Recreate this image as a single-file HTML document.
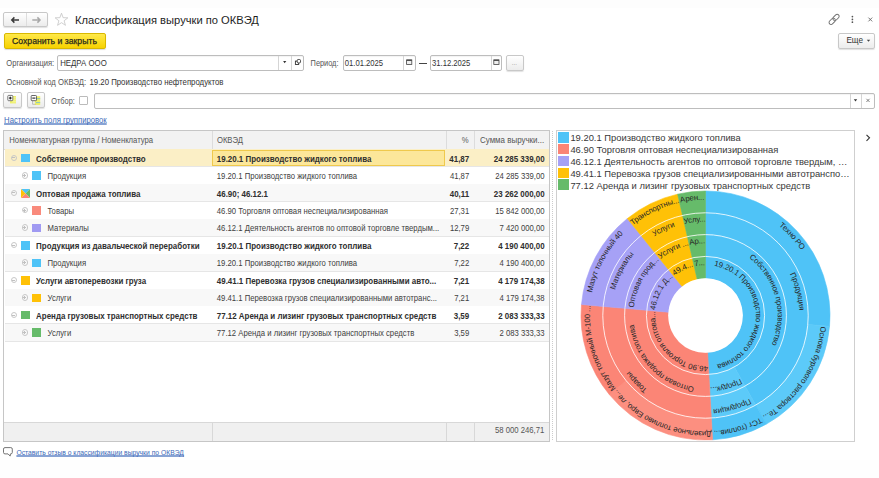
<!DOCTYPE html>
<html><head><meta charset="utf-8"><style>
html,body{margin:0;padding:0;width:879px;height:478px;overflow:hidden;background:#fff;font-family:"Liberation Sans", sans-serif;position:relative}
.abs{position:absolute}
.btn{position:absolute;box-sizing:border-box;border:1px solid #c8c8c8;border-radius:2px;background:linear-gradient(#fff,#ececec);box-shadow:0 1px 1px rgba(0,0,0,0.12)}
.inp{position:absolute;box-sizing:border-box;border:1px solid #bdbdbd;border-radius:2px;background:#fff;box-shadow:inset 0 1px 1px rgba(0,0,0,0.05)}
.t{position:absolute;white-space:nowrap;transform:scaleY(1.2)}
.tt{position:absolute;white-space:nowrap}
</style></head><body>
<div class="abs" style="left:0;top:0;width:879px;height:8px;background:#fdfdfd"></div>

<!-- nav -->
<div class="btn" style="left:3.3px;top:12.2px;width:44.5px;height:15.2px"></div>
<div class="abs" style="left:25.9px;top:13.2px;width:0.9px;height:13.2px;background:#ddd"></div>
<svg class="abs" style="left:0;top:0" width="80" height="30">
 <path d="M11.8,20 H19 M14.4,17.4 L11.8,20 L14.4,22.6" stroke="#3a3a3a" stroke-width="1.5" fill="none"/>
 <path d="M32.3,20 H40 M37.4,17.4 L40,20 L37.4,22.6" stroke="#a8a8a8" stroke-width="1.5" fill="none"/>
 <path d="M61.50,13.20 L63.12,17.68 L67.87,17.83 L64.12,20.75 L65.44,25.32 L61.50,22.65 L57.56,25.32 L58.88,20.75 L55.13,17.83 L59.88,17.68 Z" stroke="#c4c4c4" stroke-width="0.8" fill="none" stroke-linejoin="miter"/>
</svg>
<div class="tt" style="left:75px;top:14.2px;font-size:11.16px;line-height:13px;color:#1e1e1e">Классификация выручки по ОКВЭД</div>

<!-- top right icons -->
<svg class="abs" style="left:820px;top:5px" width="59" height="25">
 <g fill="none" stroke="#707070" stroke-width="0.95" transform="translate(14.1 14.4) rotate(-45)">
  <rect x="-6.3" y="-2" width="7.2" height="4" rx="2"/>
  <rect x="-0.9" y="-2" width="7.2" height="4" rx="2"/>
 </g>
 <circle cx="32.4" cy="11.6" r="0.85" fill="#555"/><circle cx="32.4" cy="14.4" r="0.85" fill="#555"/><circle cx="32.4" cy="17.2" r="0.85" fill="#555"/>
 <path d="M48.4,12.6 L52.2,16.4 M52.2,12.6 L48.4,16.4" stroke="#666" stroke-width="0.9"/>
</svg>

<!-- save button -->
<div class="abs" style="left:3.75px;top:33px;width:101.75px;height:15.75px;box-sizing:border-box;border:1px solid #d9b800;border-radius:2px;background:linear-gradient(#ffe94a,#f7d200);box-shadow:0 1px 1px rgba(0,0,0,0.15)"></div>
<div class="tt" style="left:12px;top:35.2px;font-size:8.68px;line-height:12px;color:#2a2a1a;-webkit-text-stroke:0.25px #2a2a1a">Сохранить и закрыть</div>

<!-- Еще -->
<div class="btn" style="left:838.2px;top:33px;width:36.6px;height:15.8px"></div>
<div class="t" style="left:846.4px;top:34.8px;font-size:8.16px;line-height:12px;color:#333">Еще</div>
<svg class="abs" style="left:866px;top:39px" width="6" height="4"><path d="M0.8,0.8 L4.2,0.8 L2.5,2.8Z" fill="#444"/></svg>

<!-- org row -->
<div class="t" style="left:6.3px;top:57.5px;font-size:7.6px;line-height:12px;color:#555">Организация:</div>
<div class="inp" style="left:56.8px;top:55.3px;width:246.8px;height:15.8px"></div>
<div class="abs" style="left:278.4px;top:56px;width:1px;height:13.6px;background:#d5d5d5"></div>
<div class="abs" style="left:291.3px;top:56px;width:1px;height:13.6px;background:#d5d5d5"></div>
<div class="t" style="left:60.2px;top:57.5px;font-size:7.84px;line-height:12px;color:#333">НЕДРА ООО</div>
<svg class="abs" style="left:0;top:0" width="560" height="80">
 <path d="M283.1,61 L286.3,61 L284.7,63.2Z" fill="#333"/>
 <rect x="295.4" y="61.1" width="3.3" height="3.4" fill="none" stroke="#333" stroke-width="0.9"/>
 <rect x="297.2" y="59.5" width="3.3" height="3.4" rx="1" fill="#fff" stroke="#333" stroke-width="0.9"/>
</svg>
<div class="t" style="left:310.6px;top:57.5px;font-size:7.37px;line-height:12px;color:#555">Период:</div>
<div class="inp" style="left:343.2px;top:55.3px;width:72.6px;height:15.8px"></div>
<div class="abs" style="left:403.4px;top:56px;width:1px;height:13.6px;background:#d5d5d5"></div>
<div class="t" style="left:344.8px;top:57.5px;font-size:7.67px;line-height:12px;color:#333">01.01.2025</div>
<div class="abs" style="left:419px;top:62.5px;width:7.7px;height:0.9px;background:#444"></div>
<div class="inp" style="left:430.3px;top:55.3px;width:72px;height:15.8px"></div>
<div class="abs" style="left:490.5px;top:56px;width:1px;height:13.6px;background:#d5d5d5"></div>
<div class="t" style="left:432px;top:57.5px;font-size:7.67px;line-height:12px;color:#333">31.12.2025</div>
<svg class="abs" style="left:0;top:0" width="560" height="80">
 <rect x="406.6" y="59.9" width="5.2" height="4.6" fill="#eee" stroke="#444" stroke-width="0.8"/><rect x="406.6" y="59.7" width="5.2" height="1.2" fill="#444"/>
 <rect x="493.8" y="59.9" width="5.2" height="4.6" fill="#eee" stroke="#444" stroke-width="0.8"/><rect x="493.8" y="59.7" width="5.2" height="1.2" fill="#444"/>
</svg>
<div class="btn" style="left:506px;top:54.8px;width:17.9px;height:16px"></div>
<div class="t" style="left:511.8px;top:59px;font-size:6px;line-height:8px;color:#999">...</div>

<!-- okved -->
<div class="t" style="left:6.3px;top:76.8px;font-size:7.71px;line-height:12px;color:#555">Основной код ОКВЭД:</div>
<div class="t" style="left:89.5px;top:76.8px;font-size:7.81px;line-height:12px;color:#333">19.20 Производство нефтепродуктов</div>

<!-- tool buttons -->
<div class="btn" style="left:3.1px;top:92.3px;width:18.8px;height:16.2px"></div>
<div class="btn" style="left:27px;top:92.3px;width:17.7px;height:16.2px"></div>
<svg class="abs" style="left:0;top:0" width="60" height="115">
 <rect x="10" y="96" width="6" height="7.4" fill="#eef06a"/>
 <path d="M12.5,97.8 H16 M12.5,99.8 H16 M12.5,101.8 H16" stroke="#f8f8c0" stroke-width="0.6"/>
 <rect x="7.8" y="95.4" width="5" height="5.3" rx="0.8" fill="#fff" stroke="#6a6a6a" stroke-width="0.9"/>
 <path d="M8.9,98.05 H11.7 M10.3,96.65 V99.45" stroke="#111" stroke-width="1"/>
 <rect x="34.8" y="96.2" width="5.4" height="8.8" fill="#eef06a"/>
 <path d="M36,98.6 H40.2 M36,102.6 H40.2" stroke="#7fc4c8" stroke-width="0.9"/>
 <path d="M32.6,100.8 V104.3 H35.5" stroke="#999" stroke-width="0.6" fill="none"/>
 <rect x="31.2" y="95.5" width="5.3" height="5.2" rx="0.8" fill="#fff" stroke="#555" stroke-width="0.9"/>
 <path d="M32.3,98.1 H35.4" stroke="#111" stroke-width="1"/>
</svg>
<div class="t" style="left:51.2px;top:95.6px;font-size:7.38px;line-height:12px;color:#555">Отбор:</div>
<div class="abs" style="left:78.6px;top:96.1px;width:9.3px;height:9.3px;box-sizing:border-box;border:1px solid #bbb;border-radius:1px;background:#fff"></div>
<div class="inp" style="left:94.2px;top:93px;width:781px;height:15.9px"></div>
<div class="abs" style="left:849.7px;top:94px;width:1px;height:13.9px;background:#d5d5d5"></div>
<div class="abs" style="left:861.2px;top:94px;width:1px;height:13.9px;background:#d5d5d5"></div>
<svg class="abs" style="left:0;top:0" width="879" height="115">
 <path d="M853.8,99.2 L857.2,99.2 L855.5,101.4Z" fill="#333"/>
 <path d="M866.4,98.8 L869.6,102 M869.6,98.8 L866.4,102" stroke="#666" stroke-width="0.8"/>
</svg>

<div class="t" style="left:4.1px;top:114.6px;font-size:7.71px;line-height:12px;color:#3a68b8;text-decoration:underline;text-underline-offset:0.3px;text-decoration-thickness:0.45px;text-decoration-skip-ink:none">Настроить поля группировок</div>

<!-- table -->
<div class="abs" style="left:3px;top:130px;width:546.8px;height:311.7px;box-sizing:border-box;border:1px solid #c6c6c6;background:#fff;overflow:hidden">
 <div class="abs" style="left:0;top:0;width:546px;height:18.9px;background:#f2f2f2;border-bottom:1px solid #dcdcdc;box-sizing:border-box"></div>
 <div class="abs" style="left:207.9px;top:0;width:1px;height:18.9px;background:#dcdcdc"></div>
 <div class="abs" style="left:441.8px;top:0;width:1px;height:18.9px;background:#dcdcdc"></div>
 <div class="abs" style="left:470.1px;top:0;width:1px;height:18.9px;background:#dcdcdc"></div>
 <div class="t" style="left:5.3px;top:0.7px;line-height:18.9px;font-size:7.71px;color:#555">Номенклатурная группа / Номенклатура</div>
 <div class="t" style="left:212.9px;top:0.7px;line-height:18.9px;font-size:7.71px;color:#555">ОКВЭД</div>
 <div class="t" style="right:80.2px;top:0.7px;line-height:18.9px;font-size:7.71px;color:#555">%</div>
 <div class="t" style="left:476px;top:0.7px;line-height:18.9px;font-size:7.96px;color:#555">Сумма выручки...</div>
 <div class="abs" style="left:0;top:290.8px;width:546px;height:19.7px;background:#f0f0f0;border-top:1px solid #d8d8d8;box-sizing:border-box"></div>
 <div class="abs" style="left:207.7px;top:290.8px;width:1px;height:19.7px;background:#d8d8d8"></div>
 <div class="abs" style="left:441.8px;top:290.8px;width:1px;height:19.7px;background:#d8d8d8"></div>
 <div class="abs" style="left:470.1px;top:290.8px;width:1px;height:19.7px;background:#d8d8d8"></div>
 <div class="t" style="right:4.5px;top:290.8px;line-height:18.8px;font-size:7.72px;color:#555">58 000 246,71</div>
</div>

<div style="position:absolute;left:4.5px;top:149.40px;width:544.3px;height:17.45px;background:#fbefc6"></div><div style="position:absolute;left:4.5px;top:166.35px;width:544.3px;height:1px;background:#e6e6e6"></div><div style="position:absolute;left:4.5px;top:149.40px;width:544.3px;height:17.45px;">
<div style="position:absolute;left:207.7px;top:0.6px;width:232.6px;height:15.8px;border:1px solid #efc94c;background:#fce79a;box-sizing:border-box"></div>
<div style="position:absolute;left:6.1px;top:5.3px;width:6.4px;height:6.4px;border:0.8px solid #c8c8c8;border-radius:50%;box-sizing:border-box"></div>
<div style="position:absolute;left:7.7px;top:8.1px;width:3.2px;height:0.8px;background:#c0c0c0"></div>

<div style="position:absolute;left:16.4px;top:4.5px;width:8.7px;height:8.5px;background:#4fc3f7"></div>
<div style="position:absolute;left:31.6px;top:1.3px;height:17.45px;line-height:17.45px;font-size:7.95px;font-weight:bold;color:#2e2e2e;white-space:nowrap;transform:scaleY(1.2)">Собственное производство</div>
<div style="position:absolute;left:212.3px;top:1.3px;height:17.45px;line-height:17.45px;font-size:7.95px;font-weight:bold;color:#2e2e2e;white-space:nowrap;transform:scaleY(1.2)">19.20.1 Производство жидкого топлива</div>
<div style="position:absolute;right:79.6px;top:1.3px;height:17.45px;line-height:17.45px;font-size:7.95px;font-weight:bold;color:#2e2e2e;white-space:nowrap;transform:scaleY(1.2)">41,87</div>
<div style="position:absolute;right:4.2px;top:1.3px;height:17.45px;line-height:17.45px;font-size:7.95px;font-weight:bold;color:#2e2e2e;white-space:nowrap;transform:scaleY(1.2)">24 285 339,00</div>
</div><div style="position:absolute;left:4.5px;top:166.85px;width:544.3px;height:17.45px;background:#fff"></div><div style="position:absolute;left:4.5px;top:183.80px;width:544.3px;height:1px;background:#e6e6e6"></div><div style="position:absolute;left:4.5px;top:166.85px;width:544.3px;height:17.45px;">

<div style="position:absolute;left:17.1px;top:5.3px;width:6.4px;height:6.4px;border:0.8px solid #c8c8c8;border-radius:50%;box-sizing:border-box"></div>
<div style="position:absolute;left:18.6px;top:8.1px;width:3.2px;height:0.8px;background:#c0c0c0"></div>
<div style="position:absolute;left:19.9px;top:6.9px;width:0.8px;height:3.2px;background:#c0c0c0"></div>
<div style="position:absolute;left:27.8px;top:4.5px;width:8.7px;height:8.5px;background:#4fc3f7"></div>
<div style="position:absolute;left:43.0px;top:1.3px;height:17.45px;line-height:17.45px;font-size:7.72px;font-weight:normal;color:#404040;white-space:nowrap;transform:scaleY(1.2)">Продукция</div>
<div style="position:absolute;left:212.3px;top:1.3px;height:17.45px;line-height:17.45px;font-size:7.72px;font-weight:normal;color:#404040;white-space:nowrap;transform:scaleY(1.2)">19.20.1 Производство жидкого топлива</div>
<div style="position:absolute;right:79.6px;top:1.3px;height:17.45px;line-height:17.45px;font-size:7.72px;font-weight:normal;color:#404040;white-space:nowrap;transform:scaleY(1.2)">41,87</div>
<div style="position:absolute;right:4.2px;top:1.3px;height:17.45px;line-height:17.45px;font-size:7.72px;font-weight:normal;color:#404040;white-space:nowrap;transform:scaleY(1.2)">24 285 339,00</div>
</div><div style="position:absolute;left:4.5px;top:184.30px;width:544.3px;height:17.45px;background:#f8f8f8"></div><div style="position:absolute;left:4.5px;top:201.25px;width:544.3px;height:1px;background:#e6e6e6"></div><div style="position:absolute;left:4.5px;top:184.30px;width:544.3px;height:17.45px;">

<div style="position:absolute;left:6.1px;top:5.3px;width:6.4px;height:6.4px;border:0.8px solid #c8c8c8;border-radius:50%;box-sizing:border-box"></div>
<div style="position:absolute;left:7.7px;top:8.1px;width:3.2px;height:0.8px;background:#c0c0c0"></div>

<svg style="position:absolute;left:16.4px;top:4.5px" width="9" height="9"><polygon points="0,0 9,0 4.5,4.5" fill="#4fc3f7"/><polygon points="9,0 9,9 4.5,4.5" fill="#66bb6a"/><polygon points="0,9 9,9 4.5,4.5" fill="#fb8576"/><polygon points="0,0 0,9 4.5,4.5" fill="#ffc107"/></svg>
<div style="position:absolute;left:31.6px;top:1.3px;height:17.45px;line-height:17.45px;font-size:7.95px;font-weight:bold;color:#2e2e2e;white-space:nowrap;transform:scaleY(1.2)">Оптовая продажа топлива</div>
<div style="position:absolute;left:212.3px;top:1.3px;height:17.45px;line-height:17.45px;font-size:7.95px;font-weight:bold;color:#2e2e2e;white-space:nowrap;transform:scaleY(1.2)">46.90; 46.12.1</div>
<div style="position:absolute;right:79.6px;top:1.3px;height:17.45px;line-height:17.45px;font-size:7.95px;font-weight:bold;color:#2e2e2e;white-space:nowrap;transform:scaleY(1.2)">40,11</div>
<div style="position:absolute;right:4.2px;top:1.3px;height:17.45px;line-height:17.45px;font-size:7.95px;font-weight:bold;color:#2e2e2e;white-space:nowrap;transform:scaleY(1.2)">23 262 000,00</div>
</div><div style="position:absolute;left:4.5px;top:201.75px;width:544.3px;height:17.45px;background:#fff"></div><div style="position:absolute;left:4.5px;top:218.70px;width:544.3px;height:1px;background:#e6e6e6"></div><div style="position:absolute;left:4.5px;top:201.75px;width:544.3px;height:17.45px;">

<div style="position:absolute;left:17.1px;top:5.3px;width:6.4px;height:6.4px;border:0.8px solid #c8c8c8;border-radius:50%;box-sizing:border-box"></div>
<div style="position:absolute;left:18.6px;top:8.1px;width:3.2px;height:0.8px;background:#c0c0c0"></div>
<div style="position:absolute;left:19.9px;top:6.9px;width:0.8px;height:3.2px;background:#c0c0c0"></div>
<div style="position:absolute;left:27.8px;top:4.5px;width:8.7px;height:8.5px;background:#f98a7c"></div>
<div style="position:absolute;left:43.0px;top:1.3px;height:17.45px;line-height:17.45px;font-size:7.72px;font-weight:normal;color:#404040;white-space:nowrap;transform:scaleY(1.2)">Товары</div>
<div style="position:absolute;left:212.3px;top:1.3px;height:17.45px;line-height:17.45px;font-size:7.72px;font-weight:normal;color:#404040;white-space:nowrap;transform:scaleY(1.2)">46.90 Торговля оптовая неспециализированная</div>
<div style="position:absolute;right:79.6px;top:1.3px;height:17.45px;line-height:17.45px;font-size:7.72px;font-weight:normal;color:#404040;white-space:nowrap;transform:scaleY(1.2)">27,31</div>
<div style="position:absolute;right:4.2px;top:1.3px;height:17.45px;line-height:17.45px;font-size:7.72px;font-weight:normal;color:#404040;white-space:nowrap;transform:scaleY(1.2)">15 842 000,00</div>
</div><div style="position:absolute;left:4.5px;top:219.20px;width:544.3px;height:17.45px;background:#f8f8f8"></div><div style="position:absolute;left:4.5px;top:236.15px;width:544.3px;height:1px;background:#e6e6e6"></div><div style="position:absolute;left:4.5px;top:219.20px;width:544.3px;height:17.45px;">

<div style="position:absolute;left:17.1px;top:5.3px;width:6.4px;height:6.4px;border:0.8px solid #c8c8c8;border-radius:50%;box-sizing:border-box"></div>
<div style="position:absolute;left:18.6px;top:8.1px;width:3.2px;height:0.8px;background:#c0c0c0"></div>
<div style="position:absolute;left:19.9px;top:6.9px;width:0.8px;height:3.2px;background:#c0c0c0"></div>
<div style="position:absolute;left:27.8px;top:4.5px;width:8.7px;height:8.5px;background:#a09af2"></div>
<div style="position:absolute;left:43.0px;top:1.3px;height:17.45px;line-height:17.45px;font-size:7.72px;font-weight:normal;color:#404040;white-space:nowrap;transform:scaleY(1.2)">Материалы</div>
<div style="position:absolute;left:212.3px;top:1.3px;height:17.45px;line-height:17.45px;font-size:7.72px;font-weight:normal;color:#404040;white-space:nowrap;transform:scaleY(1.2)">46.12.1 Деятельность агентов по оптовой торговле твердым...</div>
<div style="position:absolute;right:79.6px;top:1.3px;height:17.45px;line-height:17.45px;font-size:7.72px;font-weight:normal;color:#404040;white-space:nowrap;transform:scaleY(1.2)">12,79</div>
<div style="position:absolute;right:4.2px;top:1.3px;height:17.45px;line-height:17.45px;font-size:7.72px;font-weight:normal;color:#404040;white-space:nowrap;transform:scaleY(1.2)">7 420 000,00</div>
</div><div style="position:absolute;left:4.5px;top:236.65px;width:544.3px;height:17.45px;background:#fff"></div><div style="position:absolute;left:4.5px;top:253.60px;width:544.3px;height:1px;background:#e6e6e6"></div><div style="position:absolute;left:4.5px;top:236.65px;width:544.3px;height:17.45px;">

<div style="position:absolute;left:6.1px;top:5.3px;width:6.4px;height:6.4px;border:0.8px solid #c8c8c8;border-radius:50%;box-sizing:border-box"></div>
<div style="position:absolute;left:7.7px;top:8.1px;width:3.2px;height:0.8px;background:#c0c0c0"></div>

<div style="position:absolute;left:16.4px;top:4.5px;width:8.7px;height:8.5px;background:#4fc3f7"></div>
<div style="position:absolute;left:31.6px;top:1.3px;height:17.45px;line-height:17.45px;font-size:7.95px;font-weight:bold;color:#2e2e2e;white-space:nowrap;transform:scaleY(1.2)">Продукция из давальческой переработки</div>
<div style="position:absolute;left:212.3px;top:1.3px;height:17.45px;line-height:17.45px;font-size:7.95px;font-weight:bold;color:#2e2e2e;white-space:nowrap;transform:scaleY(1.2)">19.20.1 Производство жидкого топлива</div>
<div style="position:absolute;right:79.6px;top:1.3px;height:17.45px;line-height:17.45px;font-size:7.95px;font-weight:bold;color:#2e2e2e;white-space:nowrap;transform:scaleY(1.2)">7,22</div>
<div style="position:absolute;right:4.2px;top:1.3px;height:17.45px;line-height:17.45px;font-size:7.95px;font-weight:bold;color:#2e2e2e;white-space:nowrap;transform:scaleY(1.2)">4 190 400,00</div>
</div><div style="position:absolute;left:4.5px;top:254.10px;width:544.3px;height:17.45px;background:#f8f8f8"></div><div style="position:absolute;left:4.5px;top:271.05px;width:544.3px;height:1px;background:#e6e6e6"></div><div style="position:absolute;left:4.5px;top:254.10px;width:544.3px;height:17.45px;">

<div style="position:absolute;left:17.1px;top:5.3px;width:6.4px;height:6.4px;border:0.8px solid #c8c8c8;border-radius:50%;box-sizing:border-box"></div>
<div style="position:absolute;left:18.6px;top:8.1px;width:3.2px;height:0.8px;background:#c0c0c0"></div>
<div style="position:absolute;left:19.9px;top:6.9px;width:0.8px;height:3.2px;background:#c0c0c0"></div>
<div style="position:absolute;left:27.8px;top:4.5px;width:8.7px;height:8.5px;background:#4fc3f7"></div>
<div style="position:absolute;left:43.0px;top:1.3px;height:17.45px;line-height:17.45px;font-size:7.72px;font-weight:normal;color:#404040;white-space:nowrap;transform:scaleY(1.2)">Продукция</div>
<div style="position:absolute;left:212.3px;top:1.3px;height:17.45px;line-height:17.45px;font-size:7.72px;font-weight:normal;color:#404040;white-space:nowrap;transform:scaleY(1.2)">19.20.1 Производство жидкого топлива</div>
<div style="position:absolute;right:79.6px;top:1.3px;height:17.45px;line-height:17.45px;font-size:7.72px;font-weight:normal;color:#404040;white-space:nowrap;transform:scaleY(1.2)">7,22</div>
<div style="position:absolute;right:4.2px;top:1.3px;height:17.45px;line-height:17.45px;font-size:7.72px;font-weight:normal;color:#404040;white-space:nowrap;transform:scaleY(1.2)">4 190 400,00</div>
</div><div style="position:absolute;left:4.5px;top:271.55px;width:544.3px;height:17.45px;background:#fff"></div><div style="position:absolute;left:4.5px;top:288.50px;width:544.3px;height:1px;background:#e6e6e6"></div><div style="position:absolute;left:4.5px;top:271.55px;width:544.3px;height:17.45px;">

<div style="position:absolute;left:6.1px;top:5.3px;width:6.4px;height:6.4px;border:0.8px solid #c8c8c8;border-radius:50%;box-sizing:border-box"></div>
<div style="position:absolute;left:7.7px;top:8.1px;width:3.2px;height:0.8px;background:#c0c0c0"></div>

<div style="position:absolute;left:16.4px;top:4.5px;width:8.7px;height:8.5px;background:#ffc107"></div>
<div style="position:absolute;left:31.6px;top:1.3px;height:17.45px;line-height:17.45px;font-size:7.95px;font-weight:bold;color:#2e2e2e;white-space:nowrap;transform:scaleY(1.2)">Услуги автоперевозки груза</div>
<div style="position:absolute;left:212.3px;top:1.3px;height:17.45px;line-height:17.45px;font-size:7.95px;font-weight:bold;color:#2e2e2e;white-space:nowrap;transform:scaleY(1.2)">49.41.1 Перевозка грузов специализированными авто...</div>
<div style="position:absolute;right:79.6px;top:1.3px;height:17.45px;line-height:17.45px;font-size:7.95px;font-weight:bold;color:#2e2e2e;white-space:nowrap;transform:scaleY(1.2)">7,21</div>
<div style="position:absolute;right:4.2px;top:1.3px;height:17.45px;line-height:17.45px;font-size:7.95px;font-weight:bold;color:#2e2e2e;white-space:nowrap;transform:scaleY(1.2)">4 179 174,38</div>
</div><div style="position:absolute;left:4.5px;top:289.00px;width:544.3px;height:17.45px;background:#f8f8f8"></div><div style="position:absolute;left:4.5px;top:305.95px;width:544.3px;height:1px;background:#e6e6e6"></div><div style="position:absolute;left:4.5px;top:289.00px;width:544.3px;height:17.45px;">

<div style="position:absolute;left:17.1px;top:5.3px;width:6.4px;height:6.4px;border:0.8px solid #c8c8c8;border-radius:50%;box-sizing:border-box"></div>
<div style="position:absolute;left:18.6px;top:8.1px;width:3.2px;height:0.8px;background:#c0c0c0"></div>
<div style="position:absolute;left:19.9px;top:6.9px;width:0.8px;height:3.2px;background:#c0c0c0"></div>
<div style="position:absolute;left:27.8px;top:4.5px;width:8.7px;height:8.5px;background:#ffc107"></div>
<div style="position:absolute;left:43.0px;top:1.3px;height:17.45px;line-height:17.45px;font-size:7.72px;font-weight:normal;color:#404040;white-space:nowrap;transform:scaleY(1.2)">Услуги</div>
<div style="position:absolute;left:212.3px;top:1.3px;height:17.45px;line-height:17.45px;font-size:7.72px;font-weight:normal;color:#404040;white-space:nowrap;transform:scaleY(1.2)">49.41.1 Перевозка грузов специализированными автотранс...</div>
<div style="position:absolute;right:79.6px;top:1.3px;height:17.45px;line-height:17.45px;font-size:7.72px;font-weight:normal;color:#404040;white-space:nowrap;transform:scaleY(1.2)">7,21</div>
<div style="position:absolute;right:4.2px;top:1.3px;height:17.45px;line-height:17.45px;font-size:7.72px;font-weight:normal;color:#404040;white-space:nowrap;transform:scaleY(1.2)">4 179 174,38</div>
</div><div style="position:absolute;left:4.5px;top:306.45px;width:544.3px;height:17.45px;background:#fff"></div><div style="position:absolute;left:4.5px;top:323.40px;width:544.3px;height:1px;background:#e6e6e6"></div><div style="position:absolute;left:4.5px;top:306.45px;width:544.3px;height:17.45px;">

<div style="position:absolute;left:6.1px;top:5.3px;width:6.4px;height:6.4px;border:0.8px solid #c8c8c8;border-radius:50%;box-sizing:border-box"></div>
<div style="position:absolute;left:7.7px;top:8.1px;width:3.2px;height:0.8px;background:#c0c0c0"></div>

<div style="position:absolute;left:16.4px;top:4.5px;width:8.7px;height:8.5px;background:#66bb6a"></div>
<div style="position:absolute;left:31.6px;top:1.3px;height:17.45px;line-height:17.45px;font-size:7.95px;font-weight:bold;color:#2e2e2e;white-space:nowrap;transform:scaleY(1.2)">Аренда грузовых транспортных средств</div>
<div style="position:absolute;left:212.3px;top:1.3px;height:17.45px;line-height:17.45px;font-size:7.95px;font-weight:bold;color:#2e2e2e;white-space:nowrap;transform:scaleY(1.2)">77.12 Аренда и лизинг грузовых транспортных средств</div>
<div style="position:absolute;right:79.6px;top:1.3px;height:17.45px;line-height:17.45px;font-size:7.95px;font-weight:bold;color:#2e2e2e;white-space:nowrap;transform:scaleY(1.2)">3,59</div>
<div style="position:absolute;right:4.2px;top:1.3px;height:17.45px;line-height:17.45px;font-size:7.95px;font-weight:bold;color:#2e2e2e;white-space:nowrap;transform:scaleY(1.2)">2 083 333,33</div>
</div><div style="position:absolute;left:4.5px;top:323.90px;width:544.3px;height:17.45px;background:#f8f8f8"></div><div style="position:absolute;left:4.5px;top:340.85px;width:544.3px;height:1px;background:#e6e6e6"></div><div style="position:absolute;left:4.5px;top:323.90px;width:544.3px;height:17.45px;">

<div style="position:absolute;left:17.1px;top:5.3px;width:6.4px;height:6.4px;border:0.8px solid #c8c8c8;border-radius:50%;box-sizing:border-box"></div>
<div style="position:absolute;left:18.6px;top:8.1px;width:3.2px;height:0.8px;background:#c0c0c0"></div>
<div style="position:absolute;left:19.9px;top:6.9px;width:0.8px;height:3.2px;background:#c0c0c0"></div>
<div style="position:absolute;left:27.8px;top:4.5px;width:8.7px;height:8.5px;background:#66bb6a"></div>
<div style="position:absolute;left:43.0px;top:1.3px;height:17.45px;line-height:17.45px;font-size:7.72px;font-weight:normal;color:#404040;white-space:nowrap;transform:scaleY(1.2)">Услуги</div>
<div style="position:absolute;left:212.3px;top:1.3px;height:17.45px;line-height:17.45px;font-size:7.72px;font-weight:normal;color:#404040;white-space:nowrap;transform:scaleY(1.2)">77.12 Аренда и лизинг грузовых транспортных средств</div>
<div style="position:absolute;right:79.6px;top:1.3px;height:17.45px;line-height:17.45px;font-size:7.72px;font-weight:normal;color:#404040;white-space:nowrap;transform:scaleY(1.2)">3,59</div>
<div style="position:absolute;right:4.2px;top:1.3px;height:17.45px;line-height:17.45px;font-size:7.72px;font-weight:normal;color:#404040;white-space:nowrap;transform:scaleY(1.2)">2 083 333,33</div>
</div>
<!-- splitter -->
<div class="abs" style="left:552.2px;top:131px;width:1px;height:310px;background:repeating-linear-gradient(#ccc 0 1px,transparent 1px 2px)"></div>

<!-- chart panel -->
<div class="abs" style="left:556.3px;top:130.2px;width:298.6px;height:311.5px;box-sizing:border-box;border:1px solid #cfcfcf;background:#fff"></div>
<div style="position:absolute;left:557.8px;top:132.0px;width:10.9px;height:10.5px;background:#4fc3f7"></div><div style="position:absolute;left:570.4px;top:131.1px;height:13px;line-height:13px;font-size:9.4px;color:#383838;white-space:nowrap;transform:scaleY(1.06)">19.20.1 Производство жидкого топлива</div><div style="position:absolute;left:557.8px;top:143.8px;width:10.9px;height:10.5px;background:#fb8576"></div><div style="position:absolute;left:570.4px;top:142.9px;height:13px;line-height:13px;font-size:9.4px;color:#383838;white-space:nowrap;transform:scaleY(1.06)">46.90 Торговля оптовая неспециализированная</div><div style="position:absolute;left:557.8px;top:155.7px;width:10.9px;height:10.5px;background:#a6a1f6"></div><div style="position:absolute;left:570.4px;top:154.8px;height:13px;line-height:13px;font-size:9.4px;color:#383838;white-space:nowrap;transform:scaleY(1.06)">46.12.1 Деятельность агентов по оптовой торговле твердым, …</div><div style="position:absolute;left:557.8px;top:167.6px;width:10.9px;height:10.5px;background:#ffc107"></div><div style="position:absolute;left:570.4px;top:166.7px;height:13px;line-height:13px;font-size:9.4px;color:#383838;white-space:nowrap;transform:scaleY(1.06)">49.41.1 Перевозка грузов специализированными автотранспо…</div><div style="position:absolute;left:557.8px;top:179.4px;width:10.9px;height:10.5px;background:#66bb6a"></div><div style="position:absolute;left:570.4px;top:178.5px;height:13px;line-height:13px;font-size:9.4px;color:#383838;white-space:nowrap;transform:scaleY(1.06)">77.12 Аренда и лизинг грузовых транспортных средств</div>
<svg width="879" height="478" style="position:absolute;left:0;top:0">
<defs><path id="tp0" d="M655.12,316.93A50.40,50.40 0 0 1 755.88,314.07A50.40,50.40 0 0 1 655.12,316.93"/><path id="tp1" d="M741.70,280.43A50.40,50.40 0 0 1 669.30,350.57A50.40,50.40 0 0 1 741.70,280.43"/><path id="tp2" d="M749.96,339.24A50.40,50.40 0 0 1 661.04,291.76A50.40,50.40 0 0 1 749.96,339.24"/><path id="tp3" d="M727.52,360.84A50.40,50.40 0 0 1 683.48,270.16A50.40,50.40 0 0 1 727.52,360.84"/><path id="tp4" d="M711.18,365.58A50.40,50.40 0 0 1 699.82,265.42A50.40,50.40 0 0 1 711.18,365.58"/><path id="tp5" d="M635.64,333.74A72.20,72.20 0 0 1 775.36,297.26A72.20,72.20 0 0 1 635.64,333.74"/><path id="tp6" d="M685.28,246.19A72.20,72.20 0 0 1 725.72,384.81A72.20,72.20 0 0 1 685.28,246.19"/><path id="tp7" d="M757.36,265.26A72.20,72.20 0 0 1 653.64,365.74A72.20,72.20 0 0 1 757.36,265.26"/><path id="tp8" d="M769.19,349.51A72.20,72.20 0 0 1 641.81,281.49A72.20,72.20 0 0 1 769.19,349.51"/><path id="tp9" d="M737.04,380.45A72.20,72.20 0 0 1 673.96,250.55A72.20,72.20 0 0 1 737.04,380.45"/><path id="tp10" d="M713.63,387.24A72.20,72.20 0 0 1 697.37,243.76A72.20,72.20 0 0 1 713.63,387.24"/><path id="tp11" d="M614.55,339.25A94.00,94.00 0 0 1 796.45,291.75A94.00,94.00 0 0 1 614.55,339.25"/><path id="tp12" d="M679.18,225.26A94.00,94.00 0 0 1 731.82,405.74A94.00,94.00 0 0 1 679.18,225.26"/><path id="tp13" d="M773.02,250.10A94.00,94.00 0 0 1 637.98,380.90A94.00,94.00 0 0 1 773.02,250.10"/><path id="tp14" d="M788.42,359.78A94.00,94.00 0 0 1 622.58,271.22A94.00,94.00 0 0 1 788.42,359.78"/><path id="tp15" d="M746.56,400.06A94.00,94.00 0 0 1 664.44,230.94A94.00,94.00 0 0 1 746.56,400.06"/><path id="tp16" d="M716.08,408.90A94.00,94.00 0 0 1 694.92,222.10A94.00,94.00 0 0 1 716.08,408.90"/><path id="tp17" d="M620.12,393.73A115.80,115.80 0 0 1 790.88,237.27A115.80,115.80 0 0 1 620.12,393.73"/><path id="tp18" d="M608.24,252.65A115.80,115.80 0 0 1 802.76,378.35A115.80,115.80 0 0 1 608.24,252.65"/><path id="tp19" d="M673.08,204.33A115.80,115.80 0 0 1 737.92,426.67A115.80,115.80 0 0 1 673.08,204.33"/><path id="tp20" d="M751.99,209.44A115.80,115.80 0 0 1 659.01,421.56A115.80,115.80 0 0 1 751.99,209.44"/><path id="tp21" d="M816.14,281.33A115.80,115.80 0 0 1 594.86,349.67A115.80,115.80 0 0 1 816.14,281.33"/><path id="tp22" d="M807.65,370.05A115.80,115.80 0 0 1 603.35,260.95A115.80,115.80 0 0 1 807.65,370.05"/><path id="tp23" d="M756.08,419.67A115.80,115.80 0 0 1 654.92,211.33A115.80,115.80 0 0 1 756.08,419.67"/><path id="tp24" d="M718.54,430.56A115.80,115.80 0 0 1 692.46,200.44A115.80,115.80 0 0 1 718.54,430.56"/></defs>
<path d="M705.50,256.40A59.1,59.1 0 0 1 708.86,374.50L707.62,352.74A37.3,37.3 0 0 0 705.50,278.20Z" fill="#4fc3f7" stroke="#4fc3f7" stroke-width="0.6"/><path d="M708.86,374.50A59.1,59.1 0 0 1 646.63,310.27L668.35,312.20A37.3,37.3 0 0 0 707.62,352.74Z" fill="#fb8576" stroke="#fb8576" stroke-width="0.6"/><path d="M646.63,310.27A59.1,59.1 0 0 1 668.41,269.49L682.09,286.46A37.3,37.3 0 0 0 668.35,312.20Z" fill="#a6a1f6" stroke="#a6a1f6" stroke-width="0.6"/><path d="M668.41,269.49A59.1,59.1 0 0 1 692.27,257.90L697.15,279.15A37.3,37.3 0 0 0 682.09,286.46Z" fill="#ffc107" stroke="#ffc107" stroke-width="0.6"/><path d="M692.27,257.90A59.1,59.1 0 0 1 705.50,256.40L705.50,278.20A37.3,37.3 0 0 0 697.15,279.15Z" fill="#66bb6a" stroke="#66bb6a" stroke-width="0.6"/><path d="M705.50,234.60A80.9,80.9 0 0 1 745.05,386.08L734.39,367.06A59.1,59.1 0 0 0 705.50,256.40Z" fill="#4fc3f7" stroke="#4fc3f7" stroke-width="0.6"/><path d="M745.05,386.08A80.9,80.9 0 0 1 710.09,396.27L708.86,374.50A59.1,59.1 0 0 0 734.39,367.06Z" fill="#5ccaf9" stroke="#5ccaf9" stroke-width="0.6"/><path d="M710.09,396.27A80.9,80.9 0 0 1 624.92,308.34L646.63,310.27A59.1,59.1 0 0 0 708.86,374.50Z" fill="#fb8576" stroke="#fb8576" stroke-width="0.6"/><path d="M624.92,308.34A80.9,80.9 0 0 1 654.73,252.51L668.41,269.49A59.1,59.1 0 0 0 646.63,310.27Z" fill="#a6a1f6" stroke="#a6a1f6" stroke-width="0.6"/><path d="M654.73,252.51A80.9,80.9 0 0 1 687.40,236.65L692.27,257.90A59.1,59.1 0 0 0 668.41,269.49Z" fill="#ffc107" stroke="#ffc107" stroke-width="0.6"/><path d="M687.40,236.65A80.9,80.9 0 0 1 705.50,234.60L705.50,256.40A59.1,59.1 0 0 0 692.27,257.90Z" fill="#66bb6a" stroke="#66bb6a" stroke-width="0.6"/><path d="M705.50,212.80A102.7,102.7 0 0 1 755.70,405.09L745.05,386.08A80.9,80.9 0 0 0 705.50,234.60Z" fill="#4fc3f7" stroke="#4fc3f7" stroke-width="0.6"/><path d="M755.70,405.09A102.7,102.7 0 0 1 711.33,418.03L710.09,396.27A80.9,80.9 0 0 0 745.05,386.08Z" fill="#5ccaf9" stroke="#5ccaf9" stroke-width="0.6"/><path d="M711.33,418.03A102.7,102.7 0 0 1 603.20,306.42L624.92,308.34A80.9,80.9 0 0 0 710.09,396.27Z" fill="#fb8576" stroke="#fb8576" stroke-width="0.6"/><path d="M603.20,306.42A102.7,102.7 0 0 1 641.05,235.54L654.73,252.51A80.9,80.9 0 0 0 624.92,308.34Z" fill="#a6a1f6" stroke="#a6a1f6" stroke-width="0.6"/><path d="M641.05,235.54A102.7,102.7 0 0 1 682.52,215.40L687.40,236.65A80.9,80.9 0 0 0 654.73,252.51Z" fill="#ffc107" stroke="#ffc107" stroke-width="0.6"/><path d="M682.52,215.40A102.7,102.7 0 0 1 705.50,212.80L705.50,234.60A80.9,80.9 0 0 0 687.40,236.65Z" fill="#66bb6a" stroke="#66bb6a" stroke-width="0.6"/><path d="M705.50,191.00A124.5,124.5 0 0 1 829.53,326.35L807.81,324.45A102.7,102.7 0 0 0 705.50,212.80Z" fill="#4fc3f7" stroke="#4fc3f7" stroke-width="0.6"/><path d="M829.53,326.35A124.5,124.5 0 0 1 766.36,424.11L755.70,405.09A102.7,102.7 0 0 0 807.81,324.45Z" fill="#5ccaf9" stroke="#5ccaf9" stroke-width="0.6"/><path d="M766.36,424.11A124.5,124.5 0 0 1 712.57,439.80L711.33,418.03A102.7,102.7 0 0 0 755.70,405.09Z" fill="#4fc3f7" stroke="#4fc3f7" stroke-width="0.6"/><path d="M712.57,439.80A124.5,124.5 0 0 1 609.29,394.52L626.14,380.69A102.7,102.7 0 0 0 711.33,418.03Z" fill="#fc8f80" stroke="#fc8f80" stroke-width="0.6"/><path d="M609.29,394.52A124.5,124.5 0 0 1 581.49,304.49L603.20,306.42A102.7,102.7 0 0 0 626.14,380.69Z" fill="#fb8576" stroke="#fb8576" stroke-width="0.6"/><path d="M581.49,304.49A124.5,124.5 0 0 1 627.37,218.57L641.05,235.54A102.7,102.7 0 0 0 603.20,306.42Z" fill="#a6a1f6" stroke="#a6a1f6" stroke-width="0.6"/><path d="M627.37,218.57A124.5,124.5 0 0 1 677.64,194.16L682.52,215.40A102.7,102.7 0 0 0 641.05,235.54Z" fill="#ffc107" stroke="#ffc107" stroke-width="0.6"/><path d="M677.64,194.16A124.5,124.5 0 0 1 705.50,191.00L705.50,212.80A102.7,102.7 0 0 0 682.52,215.40Z" fill="#66bb6a" stroke="#66bb6a" stroke-width="0.6"/>
<circle cx="705.5" cy="315.5" r="59.1" fill="none" stroke="#fff" stroke-width="1.0" stroke-opacity="0.8"/><circle cx="705.5" cy="315.5" r="80.9" fill="none" stroke="#fff" stroke-width="1.0" stroke-opacity="0.8"/><circle cx="705.5" cy="315.5" r="102.7" fill="none" stroke="#fff" stroke-width="1.0" stroke-opacity="0.8"/>
<circle cx="705.5" cy="315.5" r="37.3" fill="#fff"/>
<g font-family='"Liberation Sans", sans-serif' font-size="7.8" fill="#262626"><text textLength="138.07" lengthAdjust="spacing"><textPath href="#tp0" startOffset="50%" text-anchor="middle" textLength="138.07" lengthAdjust="spacing">19.20.1 Производство жидкого топлива</textPath></text><text textLength="85.47" lengthAdjust="spacing"><textPath href="#tp1" startOffset="50%" text-anchor="middle" textLength="85.47" lengthAdjust="spacing">46.90 Торговля оптова...</textPath></text><text textLength="38.95" lengthAdjust="spacing"><textPath href="#tp2" startOffset="50%" text-anchor="middle" textLength="38.95" lengthAdjust="spacing">46.12.1 Д...</textPath></text><text textLength="21.13" lengthAdjust="spacing"><textPath href="#tp3" startOffset="50%" text-anchor="middle" textLength="21.13" lengthAdjust="spacing">49.4...</textPath></text><text textLength="10.56" lengthAdjust="spacing"><textPath href="#tp4" startOffset="50%" text-anchor="middle" textLength="10.56" lengthAdjust="spacing">7...</textPath></text><text textLength="96.61" lengthAdjust="spacing"><textPath href="#tp5" startOffset="50%" text-anchor="middle" textLength="96.61" lengthAdjust="spacing">Собственное производство</textPath></text><text textLength="31.64" lengthAdjust="spacing"><textPath href="#tp6" startOffset="50%" text-anchor="middle" textLength="31.64" lengthAdjust="spacing">Продук...</textPath></text><text textLength="93.14" lengthAdjust="spacing"><textPath href="#tp7" startOffset="50%" text-anchor="middle" textLength="93.14" lengthAdjust="spacing">Оптовая продажа топлива</textPath></text><text textLength="55.23" lengthAdjust="spacing"><textPath href="#tp8" startOffset="50%" text-anchor="middle" textLength="55.23" lengthAdjust="spacing">Оптовая прод...</textPath></text><text textLength="31.82" lengthAdjust="spacing"><textPath href="#tp9" startOffset="50%" text-anchor="middle" textLength="31.82" lengthAdjust="spacing">Услуги ...</textPath></text><text textLength="15.63" lengthAdjust="spacing"><textPath href="#tp10" startOffset="50%" text-anchor="middle" textLength="15.63" lengthAdjust="spacing">Ар...</textPath></text><text textLength="38.02" lengthAdjust="spacing"><textPath href="#tp11" startOffset="50%" text-anchor="middle" textLength="38.02" lengthAdjust="spacing">Продукция</textPath></text><text textLength="38.02" lengthAdjust="spacing"><textPath href="#tp12" startOffset="50%" text-anchor="middle" textLength="38.02" lengthAdjust="spacing">Продукция</textPath></text><text textLength="26.14" lengthAdjust="spacing"><textPath href="#tp13" startOffset="50%" text-anchor="middle" textLength="26.14" lengthAdjust="spacing">Товары</textPath></text><text textLength="40.69" lengthAdjust="spacing"><textPath href="#tp14" startOffset="50%" text-anchor="middle" textLength="40.69" lengthAdjust="spacing">Материалы</textPath></text><text textLength="23.37" lengthAdjust="spacing"><textPath href="#tp15" startOffset="50%" text-anchor="middle" textLength="23.37" lengthAdjust="spacing">Услуги</textPath></text><text textLength="21.93" lengthAdjust="spacing"><textPath href="#tp16" startOffset="50%" text-anchor="middle" textLength="21.93" lengthAdjust="spacing">Услу...</textPath></text><text textLength="33.42" lengthAdjust="spacing"><textPath href="#tp17" startOffset="50%" text-anchor="middle" textLength="33.42" lengthAdjust="spacing">Техно РО</textPath></text><text textLength="111.16" lengthAdjust="spacing"><textPath href="#tp18" startOffset="50%" text-anchor="middle" textLength="111.16" lengthAdjust="spacing">Основа бурового раствора Те...</textPath></text><text textLength="49.04" lengthAdjust="spacing"><textPath href="#tp19" startOffset="50%" text-anchor="middle" textLength="49.04" lengthAdjust="spacing">ТСт (топлив...</textPath></text><text textLength="107.41" lengthAdjust="spacing"><textPath href="#tp20" startOffset="50%" text-anchor="middle" textLength="107.41" lengthAdjust="spacing">Дизельное топливо Евро, ле...</textPath></text><text textLength="89.11" lengthAdjust="spacing"><textPath href="#tp21" startOffset="50%" text-anchor="middle" textLength="89.11" lengthAdjust="spacing">Мазут топочный М-100 ...</textPath></text><text textLength="67.58" lengthAdjust="spacing"><textPath href="#tp22" startOffset="50%" text-anchor="middle" textLength="67.58" lengthAdjust="spacing">Мазут топочный 40</textPath></text><text textLength="52.54" lengthAdjust="spacing"><textPath href="#tp23" startOffset="50%" text-anchor="middle" textLength="52.54" lengthAdjust="spacing">Транспортны...</textPath></text><text textLength="24.05" lengthAdjust="spacing"><textPath href="#tp24" startOffset="50%" text-anchor="middle" textLength="24.05" lengthAdjust="spacing">Арен...</textPath></text></g>
</svg>
<svg class="abs" style="left:861.8px;top:132.2px" width="12" height="12"><path d="M4.5,2.8 L7.5,5.8 L4.5,8.8" stroke="#333" stroke-width="1.1" fill="none"/></svg>

<div class="abs" style="left:0;top:460px;width:879px;height:18px;background:#fefefe"></div>
<!-- feedback -->
<svg class="abs" style="left:0;top:440px" width="16" height="20">
 <path d="M5,7.6 h5.8 a1.5,1.5 0 0 1 1.5,1.5 v3.3 a1.5,1.5 0 0 1 -1.5,1.5 h-0.4 l-0.2,2.2 l-2.2,-2.2 h-3 a1.5,1.5 0 0 1 -1.5,-1.5 v-3.3 a1.5,1.5 0 0 1 1.5,-1.5z" fill="none" stroke="#666" stroke-width="0.9" stroke-linejoin="round"/>
</svg>
<div class="t" style="left:16.4px;top:448px;font-size:6.75px;line-height:10px;color:#3a68b8;text-decoration:underline;text-underline-offset:0.3px;text-decoration-thickness:0.45px;text-decoration-skip-ink:none">Оставить отзыв о классификации выручки по ОКВЭД</div>
</body></html>
